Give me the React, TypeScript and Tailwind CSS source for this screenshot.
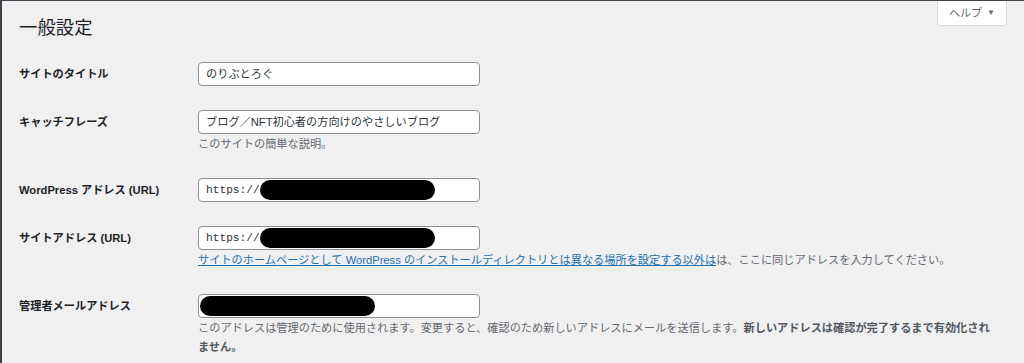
import React from "react";

const font = {
  fontFamily: '"Liberation Sans", "Noto Sans CJK JP", sans-serif',
};

function Redacted({ width }: { width: number }) {
  return (
    <span
      className="inline-block h-[20px] rounded-full bg-black align-middle"
      style={{ width }}
    />
  );
}

function Row({
  label,
  children,
}: {
  label: string;
  children: React.ReactNode;
}) {
  return (
    <div className="flex py-3">
      <div className="w-[179px] h-6 flex items-center text-[11.2px] font-semibold text-[#1d2327]">
        {label}
      </div>
      <div className="flex-1">{children}</div>
    </div>
  );
}

function Field({ children }: { children: React.ReactNode }) {
  return (
    <div className="w-[282px] h-6 flex items-center bg-white border border-[#8c8f94] rounded-[4px] px-[7px] text-[11.2px] text-[#2c3338] overflow-hidden whitespace-nowrap">
      {children}
    </div>
  );
}

export default function App() {
  return (
    <div
      className="relative w-[1024px] h-[363px] overflow-hidden bg-[#f0f0f1] border-l-2 border-t border-[#3c434a]"
      style={font}
    >
      {/* Help tab */}
      <div className="absolute top-0 right-[17px] w-[70px] h-[25px] bg-white border border-t-0 border-[#dcdcde] rounded-b-[4px] flex items-center justify-center gap-[5px] text-[11px] text-[#646970]">
        <span>ヘルプ</span>
        <span className="text-[8px]">▼</span>
      </div>

      <div className="pl-[17px]">
        <h1 className="mt-[15px] mb-[10px] h-6 leading-6 text-[18.4px] font-normal text-[#1d2327]">
          一般設定
        </h1>

        <Row label="サイトのタイトル">
          <Field>のりぶとろぐ</Field>
        </Row>

        <Row label="キャッチフレーズ">
          <Field>ブログ／NFT初心者の方向けのやさしいブログ</Field>
          <p className="mt-[1px] leading-[19px] text-[11.2px] text-[#646970]">
            このサイトの簡単な説明。
          </p>
        </Row>

        <Row label="WordPress アドレス (URL)">
          <Field>
            <span style={{ fontFamily: '"Liberation Mono", monospace' }}>
              https://
            </span>
            <Redacted width={175} />
          </Field>
        </Row>

        <Row label="サイトアドレス (URL)">
          <Field>
            <span style={{ fontFamily: '"Liberation Mono", monospace' }}>
              https://
            </span>
            <Redacted width={175} />
          </Field>
          <p className="mt-[1px] leading-[19px] text-[11.2px] text-[#646970] whitespace-nowrap">
            <a href="#" className="text-[#2271b1] underline">
              サイトのホームページとして WordPress のインストールディレクトリとは異なる場所を設定する以外は
            </a>
            は、ここに同じアドレスを入力してください。
          </p>
        </Row>

        <Row label="管理者メールアドレス">
          <div className="w-[282px] h-6 flex items-center bg-white border border-[#8c8f94] rounded-[4px] pl-[1px]">
            <Redacted width={175} />
          </div>
          <div className="mt-[1px] leading-[19px] text-[11.2px] text-[#646970] whitespace-nowrap">
            <p>
              このアドレスは管理のために使用されます。変更すると、確認のため新しいアドレスにメールを送信します。
              <strong className="font-semibold text-[#50575e]">
                新しいアドレスは確認が完了するまで有効化され
              </strong>
            </p>
            <p className="font-semibold text-[#50575e]">ません。</p>
          </div>
        </Row>
      </div>
    </div>
  );
}
